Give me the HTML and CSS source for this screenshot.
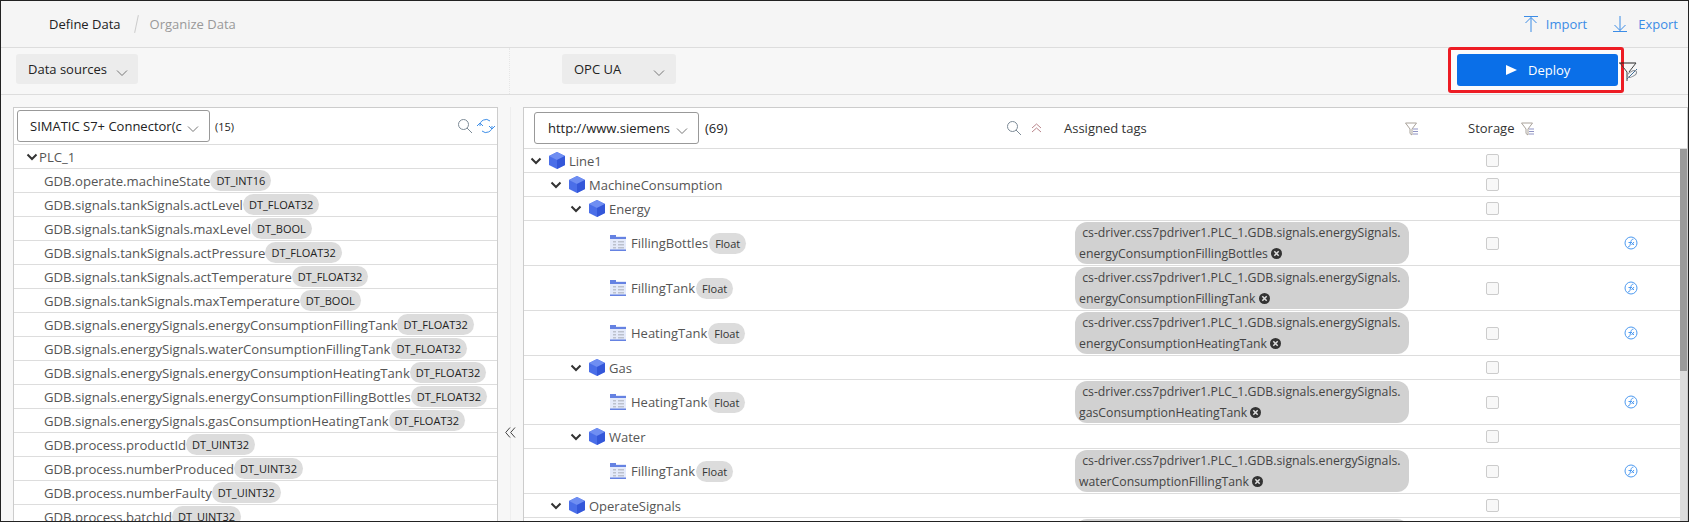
FILE: index.html
```html
<!DOCTYPE html>
<html lang="en">
<head>
    <meta charset="UTF-8">
    <title>Define Data</title>
    <link rel="stylesheet" href="styles.css">
</head>
<body>

<svg class="sprite" width="0" height="0">
    <symbol id="chev" viewBox="0 0 12 8"><path d="M1 1.500l5 5 5-5" fill="none" stroke="currentColor" stroke-width="1"/></symbol>
    <symbol id="chevBold" viewBox="0 0 12 8"><path d="M1.500 1.500L6 6l4.500-4.500" fill="none" stroke="#333" stroke-width="2"/></symbol>
    <symbol id="cube" viewBox="0 0 16 17">
        <path d="M8 0l8 4v9l-8 4-8-4V4z" fill="#4a6ee8"/>
        <path d="M8 0l8 4-8 4-8-4z" fill="#6f8ef2"/>
        <path d="M8 8l8-4v9l-8 4z" fill="#3457d9"/>
    </symbol>
    <symbol id="table" viewBox="0 0 16 16">
        <rect x="0" y="1" width="16" height="15" fill="#e4eafa"/>
        <path d="M0 0h6v2h10v2H0z" fill="#6582e2"/>
        <rect x="0" y="14.500" width="16" height="1.500" fill="#6582e2"/>
        <path d="M3 6h3v1.500H3zM8 6h6v1.500H8zM3 9h3v1.500H3zM8 9h6v1.500H8zM3 12h3v1.500H3zM8 12h6v1.500H8z" fill="#bcc1cd"/>
    </symbol>
    <symbol id="filter" viewBox="0 0 14 15">
        <path d="M.5 1h11L7 7v6L5 11.500V7z" fill="none" stroke="#a9a29a" stroke-width="1"/>
        <path d="M8 7h5M8 9.500h5M8 12h5" stroke="#8f93c4" stroke-width="1"/>
    </symbol>
    <symbol id="fx" viewBox="0 0 14 14">
        <circle cx="7" cy="7" r="6" fill="none" stroke="#4d9af0" stroke-width="1"/>
        <path d="M4 11c2 0 2-2 2.500-4S7.500 3 9.500 3M4.500 6.500h3.500M7 6l3 3M10 6L7.500 9" fill="none" stroke="#4d9af0" stroke-width="1"/>
    </symbol>
    <symbol id="close" viewBox="0 0 10 10">
        <circle cx="5" cy="5" r="5" fill="#333"/>
        <path d="M3 3l4 4M7 3L3 7" stroke="#ddd" stroke-width="1.400"/>
    </symbol>
</svg>

<div class="app">
    <header class="topbar">
        <nav class="crumbs">
            <span class="crumb-active">Define Data</span>
            <span class="crumb-sep"></span>
            <span class="crumb-next">Organize Data</span>
        </nav>
        <div class="top-actions">
            <a class="top-link">
                <svg width="14" height="16" viewBox="0 0 14 16"><path d="M0 .5h14M7 16V1.500M1.500 7L7 1.500 12.500 7" fill="none" stroke="currentColor"/></svg>
                Import
            </a>
            <a class="top-link link-export">
                <svg width="14" height="16" viewBox="0 0 14 16"><path d="M0 15.500h14M7 0v14.500M1.500 9L7 14.500 12.500 9" fill="none" stroke="currentColor"/></svg>
                Export
            </a>
        </div>
    </header>

    <div class="toolbar">
        <div class="toolbar-left">
            <div class="tool-btn tool-sources">Data sources <svg class="chev-down" width="12" height="8"><use href="#chev"/></svg></div>
        </div>
        <div class="toolbar-right">
            <div class="tool-btn tool-opc">OPC UA <svg class="chev-down" width="12" height="8"><use href="#chev"/></svg></div>
            <div class="deploy-wrap">
                <div class="deploy-mark">
                    <button class="deploy">
                        <svg width="12" height="12" viewBox="0 0 12 12"><path d="M0 1l11 5-11 5z" fill="#fff"/></svg>
                        Deploy
                    </button>
                </div>
                <svg class="deploy-filter" width="20" height="20" viewBox="0 0 20 20">
                    <path d="M0 1h17" stroke="#222"/>
                    <path d="M17 1L10 10M1 1l7 9v9" fill="none" stroke="#444"/>
                    <path d="M8 17l10-10" stroke="#3f6f9a"/>
                    <ellipse cx="13" cy="12" rx="5" ry="2.500" fill="none" stroke="#8a8f96" transform="rotate(-30 13 12)"/>
                </svg>
            </div>
        </div>
    </div>

    <main class="content">
        <section class="side">
            <div class="panel panel-left">
                <div class="panel-head head-left">
                    <div class="select select-left"><span class="select-text">SIMATIC S7+ Connector(c</span><svg class="select-chev" width="12" height="8"><use href="#chev"/></svg></div>
                    <span class="count">(15)</span>
                    <span class="head-tools">
                        <svg width="14" height="14" viewBox="0 0 14 14"><circle cx="5.500" cy="5.500" r="5" fill="none" stroke="#7c8a96"/><path d="M9 9l5 5" stroke="#7c8a96"/></svg>
                        <svg width="18" height="16" viewBox="0 0 18 16"><path d="M3 8a6 6 0 0 1 10-5M15 8a6 6 0 0 1-10 5" fill="none" stroke="#3f8fe8"/><path d="M0 8l3-3 3 3M12 8l3 3 3-3" fill="none" stroke="#3f8fe8"/></svg>
                    </span>
                </div>
                <div class="row-left root-row"><svg width="12" height="8"><use href="#chevBold"/></svg>PLC_1</div>
                <div class="row-left"><span>GDB.operate.machineState</span><span class="pill">DT_INT16</span></div>
                <div class="row-left"><span>GDB.signals.tankSignals.actLevel</span><span class="pill">DT_FLOAT32</span></div>
                <div class="row-left"><span>GDB.signals.tankSignals.maxLevel</span><span class="pill">DT_BOOL</span></div>
                <div class="row-left"><span>GDB.signals.tankSignals.actPressure</span><span class="pill">DT_FLOAT32</span></div>
                <div class="row-left"><span>GDB.signals.tankSignals.actTemperature</span><span class="pill">DT_FLOAT32</span></div>
                <div class="row-left"><span>GDB.signals.tankSignals.maxTemperature</span><span class="pill">DT_BOOL</span></div>
                <div class="row-left"><span>GDB.signals.energySignals.energyConsumptionFillingTank</span><span class="pill">DT_FLOAT32</span></div>
                <div class="row-left"><span>GDB.signals.energySignals.waterConsumptionFillingTank</span><span class="pill">DT_FLOAT32</span></div>
                <div class="row-left"><span>GDB.signals.energySignals.energyConsumptionHeatingTank</span><span class="pill">DT_FLOAT32</span></div>
                <div class="row-left"><span>GDB.signals.energySignals.energyConsumptionFillingBottles</span><span class="pill">DT_FLOAT32</span></div>
                <div class="row-left"><span>GDB.signals.energySignals.gasConsumptionHeatingTank</span><span class="pill">DT_FLOAT32</span></div>
                <div class="row-left"><span>GDB.process.productId</span><span class="pill">DT_UINT32</span></div>
                <div class="row-left"><span>GDB.process.numberProduced</span><span class="pill">DT_UINT32</span></div>
                <div class="row-left"><span>GDB.process.numberFaulty</span><span class="pill">DT_UINT32</span></div>
                <div class="row-left"><span>GDB.process.batchId</span><span class="pill">DT_UINT32</span></div>
            </div>
            <div class="collapse">
                <svg width="11" height="11" viewBox="0 0 11 11"><path d="M5 .5L.7 5.500 5 10.500M10 .5L5.700 5.500l4.300 5" fill="none" stroke="#444"/></svg>
            </div>
        </section>

        <section class="panel panel-right">
            <div class="panel-head head-right">
                <div class="col-name">
                    <div class="select select-right"><span class="select-text">http://www.siemens</span><svg class="select-chev" width="12" height="8"><use href="#chev"/></svg></div>
                    <span class="count count-right">(69)</span>
                    <span class="name-tools">
                        <svg width="14" height="14" viewBox="0 0 14 14"><circle cx="5.500" cy="5.500" r="5" fill="none" stroke="#7c8a96"/><path d="M9 9l5 5" stroke="#7c8a96"/></svg>
                        <svg width="11" height="10" viewBox="0 0 11 10"><path d="M1 5l4.500-4L10 5M1 9l4.500-4L10 9" fill="none" stroke="#b9858b"/></svg>
                    </span>
                </div>
                <div class="col-tags head-tags">Assigned tags <svg width="14" height="15"><use href="#filter"/></svg></div>
                <div class="col-store head-store">Storage <svg width="14" height="15"><use href="#filter"/></svg></div>
            </div>
            <div class="scrollbar"><div class="scrollbar-thumb"></div></div>

            <div class="row-tree">
                <div class="col-name lvl0"><svg class="tw" width="12" height="8"><use href="#chevBold"/></svg><svg class="cube" width="16" height="17"><use href="#cube"/></svg>Line1</div>
                <div class="col-store"><span class="check"></span></div>
            </div>
            <div class="row-tree">
                <div class="col-name lvl1"><svg class="tw" width="12" height="8"><use href="#chevBold"/></svg><svg class="cube" width="16" height="17"><use href="#cube"/></svg>MachineConsumption</div>
                <div class="col-store"><span class="check"></span></div>
            </div>
            <div class="row-tree">
                <div class="col-name lvl2"><svg class="tw" width="12" height="8"><use href="#chevBold"/></svg><svg class="cube" width="16" height="17"><use href="#cube"/></svg>Energy</div>
                <div class="col-store"><span class="check"></span></div>
            </div>
            <div class="row-leaf">
                <div class="col-name leaf"><svg class="tbl" width="16" height="16"><use href="#table"/></svg><span>FillingBottles</span><span class="pill pill-float">Float</span></div>
                <div class="col-tags"><div class="tag">&nbsp;cs-driver.css7pdriver1.PLC_1.GDB.signals.energySignals.<br>energyConsumptionFillingBottles <svg width="11" height="11"><use href="#close"/></svg></div></div>
                <div class="col-store"><span class="check"></span></div>
                <div class="col-fx"><svg width="14" height="14"><use href="#fx"/></svg></div>
            </div>
            <div class="row-leaf">
                <div class="col-name leaf"><svg class="tbl" width="16" height="16"><use href="#table"/></svg><span>FillingTank</span><span class="pill pill-float">Float</span></div>
                <div class="col-tags"><div class="tag">&nbsp;cs-driver.css7pdriver1.PLC_1.GDB.signals.energySignals.<br>energyConsumptionFillingTank <svg width="11" height="11"><use href="#close"/></svg></div></div>
                <div class="col-store"><span class="check"></span></div>
                <div class="col-fx"><svg width="14" height="14"><use href="#fx"/></svg></div>
            </div>
            <div class="row-leaf">
                <div class="col-name leaf"><svg class="tbl" width="16" height="16"><use href="#table"/></svg><span>HeatingTank</span><span class="pill pill-float">Float</span></div>
                <div class="col-tags"><div class="tag">&nbsp;cs-driver.css7pdriver1.PLC_1.GDB.signals.energySignals.<br>energyConsumptionHeatingTank <svg width="11" height="11"><use href="#close"/></svg></div></div>
                <div class="col-store"><span class="check"></span></div>
                <div class="col-fx"><svg width="14" height="14"><use href="#fx"/></svg></div>
            </div>
            <div class="row-tree">
                <div class="col-name lvl2"><svg class="tw" width="12" height="8"><use href="#chevBold"/></svg><svg class="cube" width="16" height="17"><use href="#cube"/></svg>Gas</div>
                <div class="col-store"><span class="check"></span></div>
            </div>
            <div class="row-leaf">
                <div class="col-name leaf"><svg class="tbl" width="16" height="16"><use href="#table"/></svg><span>HeatingTank</span><span class="pill pill-float">Float</span></div>
                <div class="col-tags"><div class="tag">&nbsp;cs-driver.css7pdriver1.PLC_1.GDB.signals.energySignals.<br>gasConsumptionHeatingTank <svg width="11" height="11"><use href="#close"/></svg></div></div>
                <div class="col-store"><span class="check"></span></div>
                <div class="col-fx"><svg width="14" height="14"><use href="#fx"/></svg></div>
            </div>
            <div class="row-tree">
                <div class="col-name lvl2"><svg class="tw" width="12" height="8"><use href="#chevBold"/></svg><svg class="cube" width="16" height="17"><use href="#cube"/></svg>Water</div>
                <div class="col-store"><span class="check"></span></div>
            </div>
            <div class="row-leaf">
                <div class="col-name leaf"><svg class="tbl" width="16" height="16"><use href="#table"/></svg><span>FillingTank</span><span class="pill pill-float">Float</span></div>
                <div class="col-tags"><div class="tag">&nbsp;cs-driver.css7pdriver1.PLC_1.GDB.signals.energySignals.<br>waterConsumptionFillingTank <svg width="11" height="11"><use href="#close"/></svg></div></div>
                <div class="col-store"><span class="check"></span></div>
                <div class="col-fx"><svg width="14" height="14"><use href="#fx"/></svg></div>
            </div>
            <div class="row-tree">
                <div class="col-name lvl1"><svg class="tw" width="12" height="8"><use href="#chevBold"/></svg><svg class="cube" width="16" height="17"><use href="#cube"/></svg>OperateSignals</div>
                <div class="col-store"><span class="check"></span></div>
            </div>
            <div class="row-leaf">
                <div class="col-name leaf"></div>
                <div class="col-tags"><div class="tag">&nbsp;</div></div>
            </div>
        </section>
    </main>
</div>

</body>
</html>
```

FILE: styles.css
```css
html, body {
    margin: 0;
    padding: 0;
    background: #fff;
}

body {
    font-family: "Open Sans", "Noto Sans", sans-serif;
    font-size: 13px;
    color: #333;
}

.sprite {
    display: block;
    height: 0;
}

svg {
    flex: none;
}

.app {
    height: 522px;
    box-sizing: border-box;
    border: 1px solid #222;
    background: #f7f7f7;
    overflow: hidden;
    display: flex;
    flex-direction: column;
}

/* top bar */
.topbar {
    height: 46px;
    flex: none;
    display: flex;
    align-items: center;
    justify-content: space-between;
    background: #f5f5f5;
    border-bottom: 1px solid #ddd;
    padding: 0 10px 0 48px;
}

.crumbs {
    display: flex;
    align-items: center;
}

.crumb-active {
    color: #222;
}

.crumb-next {
    color: #999;
}

.crumb-sep {
    width: 1px;
    height: 18px;
    margin: 0 13px 0 15px;
    background: #ccc;
    transform: rotate(12deg);
}

.top-actions {
    display: flex;
    gap: 26px;
}

.top-link {
    display: flex;
    align-items: center;
    gap: 8px;
    color: #3b8ce6;
}

.link-export {
    gap: 11px;
}

/* second bar */
.toolbar {
    height: 46px;
    flex: none;
    display: flex;
    background: #f7f7f7;
    border-bottom: 1px solid #ddd;
}

.toolbar-left {
    width: 509px;
    box-sizing: border-box;
    padding: 6px 0 0 15px;
    border-right: 1px dotted #e6e6e6;
}

.toolbar-right {
    flex: 1;
    display: flex;
    justify-content: space-between;
    padding: 6px 64px 0 52px;
}

.tool-btn {
    height: 30px;
    box-sizing: border-box;
    display: flex;
    align-items: center;
    background: #ececec;
    border-radius: 3px;
    color: #222;
    font-weight: 500;
    padding-left: 12px;
}

.chev-down {
    color: #777;
}

.tool-sources {
    width: 122px;
}

.tool-opc {
    width: 114px;
}

.tool-sources .chev-down {
    margin: 7px 0 0 9px;
}

.tool-opc .chev-down {
    margin: 7px 0 0 32px;
}

.deploy-wrap {
    position: relative;
    margin-top: -7px;
}

.deploy-mark {
    box-sizing: border-box;
    width: 176px;
    height: 46px;
    border: 3px solid #ed1c24;
    border-radius: 3px;
    padding: 4px 3px 0 6px;
    background: #fbfbfb;
}

.deploy {
    width: 161px;
    height: 32px;
    display: flex;
    align-items: center;
    gap: 10px;
    padding: 0 0 0 49px;
    border: none;
    border-radius: 3px;
    background: #0a6fe8;
    color: #fff;
    font: inherit;
}

.deploy-filter {
    position: absolute;
    left: 171px;
    top: 15px;
}

/* panels */
.content {
    flex: 1;
    min-height: 0;
    display: flex;
    padding-top: 12px;
}

.side {
    width: 522px;
    flex: none;
    display: flex;
    background: linear-gradient(to right, transparent 509px, #eeeeee 509px, #eeeeee 510px, transparent 510px);
}

.panel {
    background: #fff;
    border: 1px solid #ccc;
    border-bottom: none;
    box-sizing: border-box;
}

.panel-left {
    width: 485px;
    margin-left: 12px;
    flex: none;
}

.panel-right {
    flex: 1;
    position: relative;
}

.collapse {
    flex: 1;
    display: flex;
    justify-content: center;
    padding-top: 320px;
}

.panel-head {
    display: flex;
    align-items: center;
    box-sizing: border-box;
    border-bottom: 1px solid #ddd;
}

.head-left {
    height: 37px;
    padding-left: 3px;
}

.head-right {
    height: 41px;
}

.select {
    height: 32px;
    box-sizing: border-box;
    display: flex;
    align-items: center;
    border: 1px solid #999;
    border-radius: 3px;
    background: #fff;
    color: #222;
    white-space: nowrap;
    position: relative;
    overflow: hidden;
}

.select-text {
    overflow: hidden;
}

.select-left {
    width: 193px;
    padding-left: 12px;
}

.select-left .select-text {
    width: 154px;
}

.select-right {
    width: 165px;
    padding-left: 13px;
    margin-left: 10px;
}

.select-chev {
    margin: 6px 0 0 3px;
    color: #777;
}

.select-right .select-chev {
    margin-left: 6px;
}

.count {
    margin-left: 5px;
    font-size: 11px;
    color: #222;
}

.count-right {
    font-size: 13px;
    margin-left: 6px;
}

.head-tools {
    margin-left: auto;
    display: flex;
    align-items: center;
    gap: 5px;
    padding-right: 2px;
}

.row-left {
    height: 24px;
    box-sizing: border-box;
    border-bottom: 1px solid #ddd;
    display: flex;
    align-items: center;
    padding-left: 30px;
    color: #555;
    font-size: 13.150px;
    white-space: nowrap;
}

.root-row {
    padding-left: 12px;
    gap: 1px;
}

.pill {
    background: #dcdcdc;
    border-radius: 11px;
    padding: 0 6px;
    line-height: 21px;
    font-size: 11px;
    color: #222;
}

.pill-float {
    margin-left: 1px;
    color: #333;
}

/* tree table */
.name-tools {
    margin-left: auto;
    display: flex;
    align-items: center;
    gap: 10px;
    padding-right: 1px;
}

.row-tree, .row-leaf {
    display: flex;
    align-items: center;
    box-sizing: border-box;
    border-bottom: 1px solid #ddd;
    color: #555;
    white-space: nowrap;
}

.row-tree {
    height: 24px;
}

.row-leaf {
    height: 45px;
}

.col-name {
    width: 519px;
    flex: none;
    box-sizing: border-box;
    display: flex;
    align-items: center;
}

.col-tags {
    width: 384px;
    flex: none;
    box-sizing: border-box;
    padding-left: 32px;
}

.col-store {
    width: 131px;
    flex: none;
    display: flex;
    justify-content: center;
    box-sizing: border-box;
}

.row-tree .col-store {
    margin-left: 384px;
}

.head-tags {
    display: flex;
    justify-content: space-between;
    padding: 0 8px 0 21px;
    color: #333;
}

.head-tags svg, .head-store svg {
    margin-top: 3px;
}

.head-store {
    justify-content: flex-start;
    padding-left: 41px;
    gap: 7px;
    align-items: center;
    color: #333;
}

.tw {
    margin-right: 7px;
}

.cube {
    margin-right: 4px;
}

.tbl {
    margin-right: 5px;
}

.lvl0 {
    padding-left: 6px;
}

.lvl1 {
    padding-left: 26px;
}

.lvl2 {
    padding-left: 46px;
}

.leaf {
    padding-left: 86px;
}

.tag {
    width: 334px;
    height: 42px;
    box-sizing: border-box;
    padding: 0 4px;
    background: #d1d1d1;
    border-radius: 12px;
    line-height: 21px;
    font-size: 12.250px;
    color: #444;
    overflow: hidden;
}

.tag svg {
    vertical-align: -1px;
}

.check {
    width: 13px;
    height: 13px;
    box-sizing: border-box;
    background: #f8f8f8;
    border: 1px solid #ccc;
    border-radius: 2px;
}

.col-fx {
    display: flex;
    margin-left: 66px;
}

.scrollbar {
    position: absolute;
    right: 0;
    top: 41px;
    bottom: 0;
    width: 7px;
    background: #dcdcdc;
}

.scrollbar-thumb {
    height: 222px;
    background: #9a9a9a;
}
```
